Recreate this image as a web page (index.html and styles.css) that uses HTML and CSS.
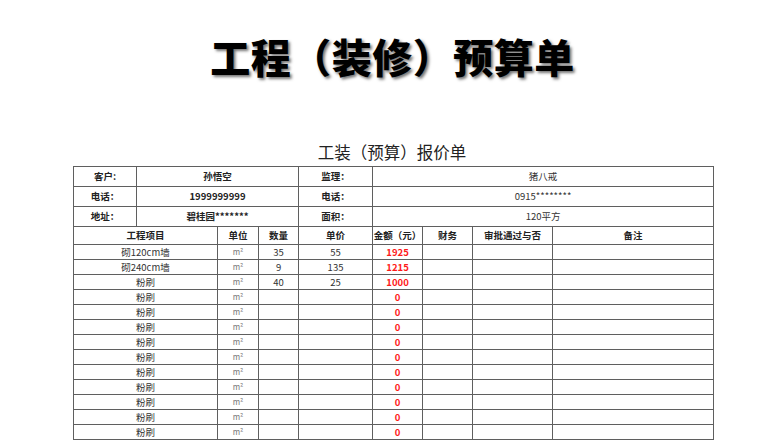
FILE: index.html
```html
<!DOCTYPE html>
<html lang="zh-CN">
<head>
<meta charset="utf-8">
<title>工程（装修）预算单</title>
<link rel="stylesheet" href="styles.css">
</head>
<body>
<div class="page">
  <h1 class="title">工程（装修）预算单</h1>
  <h2 class="subtitle">工装（预算）报价单</h2>
  <table class="sheet">
    <colgroup>
      <col class="c1"><col class="c2"><col class="c3"><col class="c4"><col class="c5"><col class="c6"><col class="c7"><col class="c8"><col class="c9">
    </colgroup>
    <tbody>
      <tr class="info"><td class="b">客户:</td><td colspan="3" class="b">孙悟空</td><td class="b">监理：</td><td colspan="4">猪八戒</td></tr>
      <tr class="info"><td class="b">电话：</td><td colspan="3" class="b">1999999999</td><td class="b">电话：</td><td colspan="4">0915********</td></tr>
      <tr class="info"><td class="b">地址：</td><td colspan="3" class="b">碧桂园*******</td><td class="b">面积：</td><td colspan="4">120平方</td></tr>
      <tr class="head"><td colspan="2">工程项目</td><td>单位</td><td>数量</td><td>单价</td><td>金额（元）</td><td>财务</td><td>审批通过与否</td><td>备注</td></tr>
      <tr class="item"><td colspan="2">砌120cm墙</td><td class="u">m²</td><td>35</td><td>55</td><td class="amt">1925</td><td></td><td></td><td></td></tr>
      <tr class="item"><td colspan="2">砌240cm墙</td><td class="u">m²</td><td>9</td><td>135</td><td class="amt">1215</td><td></td><td></td><td></td></tr>
      <tr class="item"><td colspan="2">粉刷</td><td class="u">m²</td><td>40</td><td>25</td><td class="amt">1000</td><td></td><td></td><td></td></tr>
      <tr class="item"><td colspan="2">粉刷</td><td class="u">m²</td><td></td><td></td><td class="amt">0</td><td></td><td></td><td></td></tr>
      <tr class="item"><td colspan="2">粉刷</td><td class="u">m²</td><td></td><td></td><td class="amt">0</td><td></td><td></td><td></td></tr>
      <tr class="item"><td colspan="2">粉刷</td><td class="u">m²</td><td></td><td></td><td class="amt">0</td><td></td><td></td><td></td></tr>
      <tr class="item"><td colspan="2">粉刷</td><td class="u">m²</td><td></td><td></td><td class="amt">0</td><td></td><td></td><td></td></tr>
      <tr class="item"><td colspan="2">粉刷</td><td class="u">m²</td><td></td><td></td><td class="amt">0</td><td></td><td></td><td></td></tr>
      <tr class="item"><td colspan="2">粉刷</td><td class="u">m²</td><td></td><td></td><td class="amt">0</td><td></td><td></td><td></td></tr>
      <tr class="item"><td colspan="2">粉刷</td><td class="u">m²</td><td></td><td></td><td class="amt">0</td><td></td><td></td><td></td></tr>
      <tr class="item"><td colspan="2">粉刷</td><td class="u">m²</td><td></td><td></td><td class="amt">0</td><td></td><td></td><td></td></tr>
      <tr class="item"><td colspan="2">粉刷</td><td class="u">m²</td><td></td><td></td><td class="amt">0</td><td></td><td></td><td></td></tr>
      <tr class="item"><td colspan="2">粉刷</td><td class="u">m²</td><td></td><td></td><td class="amt">0</td><td></td><td></td><td></td></tr>
    </tbody>
  </table>
</div>
</body>
</html>
```

FILE: styles.css
```css
html, body {
  margin: 0;
  padding: 0;
  background: #ffffff;
}
body {
  width: 780px;
  height: 440px;
  overflow: hidden;
  font-family: "Noto Sans CJK SC", "Noto Sans", sans-serif;
  color: #222;
}
.page {
  padding-top: 32px;
}
.title {
  margin: 0;
  margin-left: 5px;
  height: 48px;
  line-height: 48px;
  font-size: 40px;
  font-weight: 900;
  text-align: center;
  color: #000;
  letter-spacing: 0.5px;
  text-shadow: 2px 2px 3px rgba(0, 0, 0, 0.55);
}
.subtitle {
  margin: 61px 0 0 0;
  margin-left: 4px;
  height: 22px;
  line-height: 22px;
  font-size: 16.5px;
  font-weight: 400;
  text-align: center;
  color: #222;
}
.sheet {
  margin: 3px 0 0 73px;
  width: 640px;
  table-layout: fixed;
  border-collapse: collapse;
  font-size: 9.5px;
}
.c1 { width: 63px; }
.c2 { width: 81px; }
.c3 { width: 41px; }
.c4 { width: 40px; }
.c5 { width: 74px; }
.c6 { width: 50px; }
.c7 { width: 50px; }
.c8 { width: 80px; }
.c9 { width: 161px; }
.sheet td {
  border: 1px solid #5f5f5f;
  padding: 0;
  text-align: center;
  vertical-align: middle;
  white-space: nowrap;
  overflow: hidden;
  color: #333;
}
.info td {
  height: 19px;
  line-height: 19px;
}
.head td {
  height: 17px;
  line-height: 17px;
  font-weight: 700;
  color: #222;
}
.item td {
  height: 14px;
  line-height: 14px;
}
.sheet td.b {
  font-weight: 700;
  color: #222;
}
.sheet td.u {
  font-size: 8px;
  color: #777;
}
.sheet td.amt {
  color: #ff1a1a;
  font-weight: 700;
}
```
